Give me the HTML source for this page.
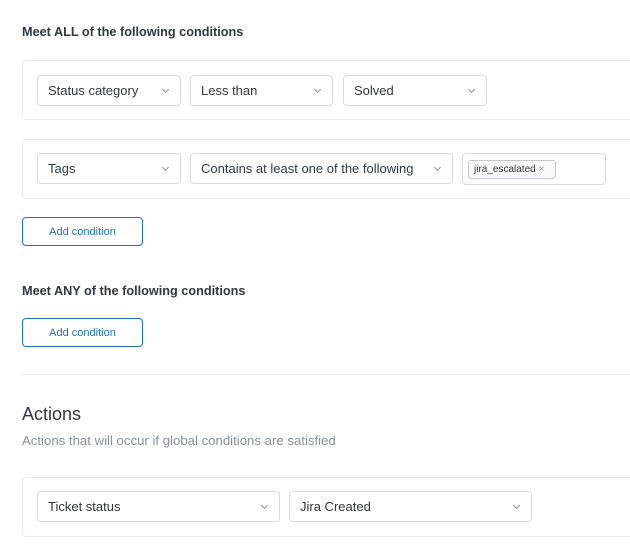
<!DOCTYPE html>
<html><head><style>
*{box-sizing:border-box;margin:0;padding:0}
body{width:630px;height:558px;background:#fff;font-family:"Liberation Sans",sans-serif;color:#2f3941;position:relative;overflow:hidden}
.a{position:absolute}
h3{position:absolute;left:22px;font-size:12.7px;font-weight:bold;color:#2f3941}
.panel{position:absolute;left:22px;width:620px;border:1px solid #e9ebed;border-radius:4px}
.sel{position:absolute;height:31px;border:1px solid #d8dcde;border-radius:4px;font-size:13px;line-height:29px;padding-left:10px;color:#2f3941}
.sel:after{content:"";position:absolute;right:12px;top:11px;width:4px;height:4px;border-right:1px solid #87929d;border-bottom:1px solid #87929d;transform:rotate(45deg)}
.btn{position:absolute;left:22px;width:121px;height:29px;border:1px solid #1f73b7;border-radius:4px;color:#1f73b7;font-size:11px;text-align:center;line-height:28px}
</style></head><body>
<h3 style="top:25px">Meet ALL of the following conditions</h3>
<div class="panel" style="top:60px;height:60px"></div>
<div class="sel" style="left:37px;top:75px;width:144px">Status category</div>
<div class="sel" style="left:190px;top:75px;width:143px">Less than</div>
<div class="sel" style="left:343px;top:75px;width:144px">Solved</div>
<div class="panel" style="top:139px;height:60px"></div>
<div class="sel" style="left:37px;top:153px;width:144px">Tags</div>
<div class="sel" style="left:190px;top:153px;width:263px">Contains at least one of the following</div>
<div class="a" style="left:462px;top:153px;width:144px;height:32px;border:1px solid #d8dcde;border-radius:4px"></div>
<div class="a" style="left:468px;top:160px;width:88px;height:19px;border:1px solid #c2c8cc;border-radius:3px;background:#f8f9f9;font-size:10px;line-height:17px;padding-left:5px;color:#2f3941">jira_escalated <span style="color:#87929d">×</span></div>
<div class="btn" style="top:217px">Add condition</div>
<h3 style="top:284px">Meet ANY of the following conditions</h3>
<div class="btn" style="top:318px">Add condition</div>
<div class="a" style="left:22px;top:374px;width:608px;height:1px;background:#e9ebed"></div>
<div class="a" style="left:22px;top:404px;font-size:18px;color:#2f3941">Actions</div>
<div class="a" style="left:22px;top:433px;font-size:13.2px;color:#87929d">Actions that will occur if global conditions are satisfied</div>
<div class="panel" style="top:477px;height:60px"></div>
<div class="sel" style="left:37px;top:491px;width:243px">Ticket status</div>
<div class="sel" style="left:289px;top:491px;width:243px">Jira Created</div>
</body></html>
